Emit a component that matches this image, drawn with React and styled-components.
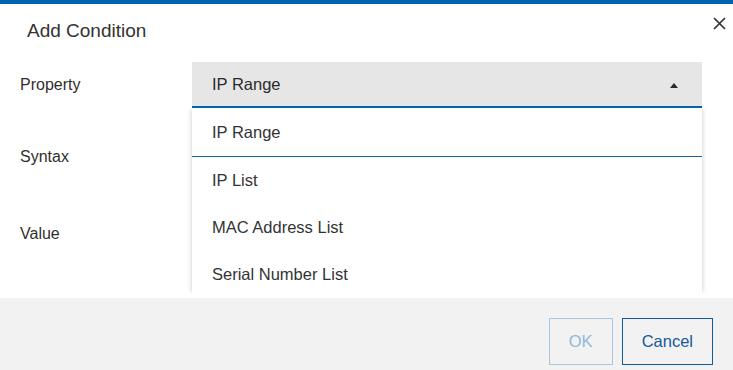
import React from 'react';
import styled, { createGlobalStyle } from 'styled-components';

const GlobalStyle = createGlobalStyle`
  html, body {
    margin: 0;
    padding: 0;
    background: #ffffff;
  }
  body {
    font-family: "Liberation Sans", Arial, sans-serif;
    color: #2f2f2f;
  }
`;

const BLUE = '#0063b1';

const Dialog = styled.div`
  width: 733px;
  height: 370px;
  box-sizing: border-box;
  border-top: 4px solid ${BLUE};
  background: #ffffff;
  display: flex;
  flex-direction: column;
`;

const Header = styled.div`
  height: 58px;
  display: flex;
  justify-content: space-between;
  align-items: flex-start;
  padding: 0 6px 0 27px;
`;

const Title = styled.h2`
  margin: 16px 0 0;
  font-size: 19px;
  font-weight: 400;
  line-height: 22px;
  color: #333333;
`;

const CloseButton = styled.button`
  margin-top: 11px;
  width: 16px;
  height: 16px;
  padding: 0;
  border: none;
  background: none;
  display: flex;
  align-items: center;
  justify-content: center;
  cursor: pointer;
  color: #333333;
`;

const Body = styled.div`
  flex: 1;
  position: relative;
  overflow: hidden;
  padding: 0 31px 0 20px;
`;

const Row = styled.div`
  display: grid;
  grid-template-columns: 172px 1fr;
  align-items: center;
  height: 46px;
  margin-top: ${(p) => p.$gap || 0}px;
`;

const Label = styled.span`
  font-size: 16px;
  color: #2f2f2f;
`;

const SelectWrap = styled.div`
  position: relative;
  height: 46px;
`;

const SelectBox = styled.div`
  height: 44px;
  box-sizing: content-box;
  background: #e6e6e6;
  border-bottom: 2px solid ${BLUE};
  display: flex;
  align-items: center;
  justify-content: space-between;
  padding: 0 24px 0 20px;
  font-size: 16.5px;
  color: #2b2b2b;
`;

const Caret = styled.span`
  width: 0;
  height: 0;
  border-left: 4.5px solid transparent;
  border-right: 4.5px solid transparent;
  border-bottom: 5px solid #2b2b2b;
  margin-top: 3px;
`;

const Menu = styled.ul`
  position: absolute;
  top: calc(100% + 1px);
  left: 0;
  right: 0;
  height: 184px;
  margin: 0;
  padding: 0;
  list-style: none;
  overflow: hidden;
  background: #ffffff;
  box-shadow: 0 0 5px rgba(0, 0, 0, 0.22);
  clip-path: inset(0 -10px 0 -10px);
  z-index: 5;
`;

const MenuItem = styled.li`
  height: 47px;
  flex-shrink: 0;
  display: flex;
  align-items: center;
  padding-left: 20px;
  font-size: 16.5px;
  color: #333333;
  border-bottom: ${(p) => (p.$selected ? `1px solid #1a62a8` : 'none')};
`;

const Footer = styled.div`
  height: 72px;
  background: #f2f2f2;
  display: flex;
  justify-content: flex-end;
  align-items: flex-start;
  gap: 9px;
  padding: 20px 20px 0 0;
  box-sizing: border-box;
`;

const Button = styled.button`
  height: 47px;
  padding: 0 19px;
  background: transparent;
  font-family: "Liberation Sans", Arial, sans-serif;
  font-size: 16.5px;
  border: 1px solid ${(p) => (p.disabled ? '#a8c7e0' : '#0f5d9f')};
  color: ${(p) => (p.disabled ? '#93b7d6' : '#17599a')};
  cursor: ${(p) => (p.disabled ? 'default' : 'pointer')};
`;

const options = ['IP Range', 'IP List', 'MAC Address List', 'Serial Number List'];

export default function App() {
  return (
    <>
      <GlobalStyle />
      <Dialog>
        <Header>
          <Title>Add Condition</Title>
          <CloseButton aria-label="Close">
            <svg width="13" height="13" viewBox="0 0 13 13">
              <path d="M1 1L12 12M12 1L1 12" stroke="currentColor" strokeWidth="1.7" />
            </svg>
          </CloseButton>
        </Header>
        <Body>
          <Row>
            <Label>Property</Label>
            <SelectWrap>
              <SelectBox>
                IP Range
                <Caret />
              </SelectBox>
              <Menu>
                {options.map((o, i) => (
                  <MenuItem key={o} $selected={i === 0}>
                    {o}
                  </MenuItem>
                ))}
              </Menu>
            </SelectWrap>
          </Row>
          <Row $gap={26}>
            <Label>Syntax</Label>
          </Row>
          <Row $gap={31}>
            <Label>Value</Label>
          </Row>
        </Body>
        <Footer>
          <Button disabled>OK</Button>
          <Button>Cancel</Button>
        </Footer>
      </Dialog>
    </>
  );
}
